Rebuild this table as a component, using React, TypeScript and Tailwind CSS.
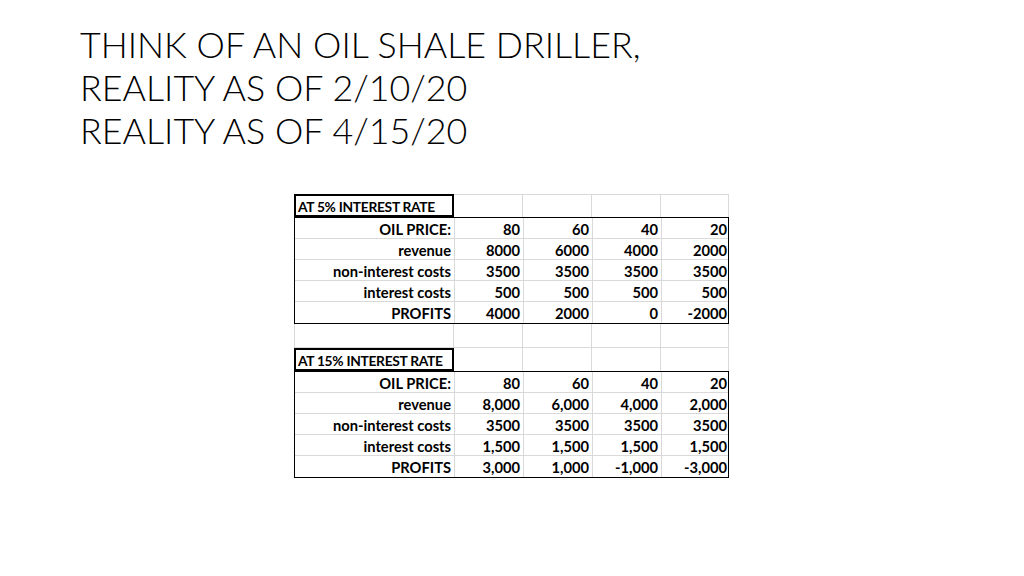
import React from "react";

const cols = ["w-[160px]", "w-[69px]", "w-[69px]", "w-[69px]", "w-[68px]"];

function DataBlock({ rows }: { rows: string[][] }) {
  return (
    <div className="border border-black w-[435px]">
      {rows.map((r, i) => (
        <div key={i} className={`flex h-[21px] ${i < rows.length - 1 ? "border-b border-[#d9d9d9]" : ""}`}>
          {r.map((c, j) => (
            <div
              key={j}
              className={`${cols[j]} shrink-0 flex items-center justify-end pr-[3px] pt-[2px] whitespace-nowrap ${j < r.length - 1 ? "border-r border-[#d9d9d9]" : ""}`}
            >
              {c}
            </div>
          ))}
        </div>
      ))}
    </div>
  );
}

function HeaderRow({ label, top }: { label: string; top?: boolean }) {
  return (
    <div className="flex h-[23px] w-[435px]">
      <div className="w-[160px] shrink-0 border-2 border-black flex items-center pl-[2px] pt-[2px] whitespace-nowrap overflow-hidden text-[13.8px] tracking-[-0.3px]">
        {label}
      </div>
      {[1, 2, 3, 4].map((j) => (
        <div
          key={j}
          className={`${cols[j]} shrink-0 border-r border-[#d9d9d9] ${top ? "border-t" : ""}`}
        />
      ))}
    </div>
  );
}

function EmptyRow() {
  return (
    <div className="flex h-[24px] w-[435px] border-b border-[#d9d9d9]">
      {cols.map((c, j) => (
        <div key={j} className={`${c} shrink-0 border-r border-[#d9d9d9] ${j === 0 ? "border-l" : ""}`} />
      ))}
    </div>
  );
}

export default function App() {
  const block1 = [
    ["OIL PRICE:", "80", "60", "40", "20"],
    ["revenue", "8000", "6000", "4000", "2000"],
    ["non-interest costs", "3500", "3500", "3500", "3500"],
    ["interest costs", "500", "500", "500", "500"],
    ["PROFITS", "4000", "2000", "0", "-2000"],
  ];
  const block2 = [
    ["OIL PRICE:", "80", "60", "40", "20"],
    ["revenue", "8,000", "6,000", "4,000", "2,000"],
    ["non-interest costs", "3500", "3500", "3500", "3500"],
    ["interest costs", "1,500", "1,500", "1,500", "1,500"],
    ["PROFITS", "3,000", "1,000", "-1,000", "-3,000"],
  ];
  return (
    <div className="w-[1024px] h-[576px] bg-white overflow-hidden text-black">
      <div
        className="pl-[80px] pt-[23px] text-[35.8px] leading-[43px] font-light"
        style={{ fontFamily: "Lato, 'Noto Sans', sans-serif" }}
      >
        <div>THINK OF AN OIL SHALE DRILLER,</div>
        <div>REALITY AS OF 2/10/20</div>
        <div>REALITY AS OF 4/15/20</div>
      </div>
      <div
        className="ml-[294px] mt-[42px] text-[14.7px] font-bold leading-none"
        style={{ fontFamily: "Lato, 'Noto Sans', sans-serif" }}
      >
        <HeaderRow label="AT 5% INTEREST RATE" top />
        <DataBlock rows={block1} />
        <EmptyRow />
        <HeaderRow label="AT 15% INTEREST RATE" />
        <DataBlock rows={block2} />
      </div>
    </div>
  );
}
